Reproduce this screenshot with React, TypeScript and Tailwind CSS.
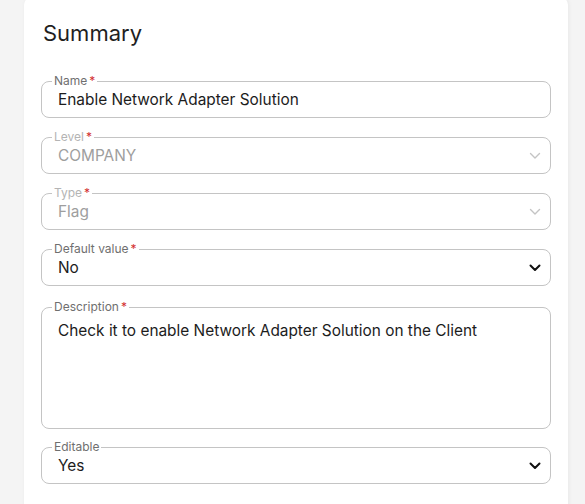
import React from "react";

type FieldProps = {
  label: string;
  required?: boolean;
  disabled?: boolean;
  children: React.ReactNode;
};

function Field({ label, required, disabled, children }: FieldProps) {
  return (
    <fieldset className="border border-[#c4c4c4] rounded-[8px] px-0 pb-0 m-0 min-w-0">
      <legend
        className={`ml-[10px] px-[2px] text-[12px] leading-[14px] ${disabled ? "text-[#b4b4b4]" : "text-[#6f6f6f]"}`}
      >
        {label}
        {required && <span className="text-[#d32f2f] ml-[2px]">*</span>}
      </legend>
      {children}
    </fieldset>
  );
}

function Chevron({ disabled }: { disabled?: boolean }) {
  return (
    <svg width="12" height="8" viewBox="0 0 12 8" fill="none">
      <path
        d="M1.5 1.5 L6 6 L10.5 1.5"
        stroke={disabled ? "#c4c4c4" : "#111111"}
        strokeWidth={disabled ? 1.4 : 2}
        strokeLinecap="round"
        strokeLinejoin="round"
      />
    </svg>
  );
}

function TextRow({ value, disabled, select }: { value: string; disabled?: boolean; select?: boolean }) {
  return (
    <div className="flex items-center justify-between pl-[16px] pr-[9px] pt-[3px] pb-[8px]">
      <span className={`text-[15.4px] leading-[18px] ${disabled ? "text-[#9e9e9e]" : "text-[#1c1c1c]"}`}>
        {value}
      </span>
      {select && <Chevron disabled={disabled} />}
    </div>
  );
}

export default function App() {
  return (
    <div
      className="min-h-[504px] bg-[#f4f4f4] pl-[24px] pr-[17px] overflow-hidden"
      style={{ fontFamily: "Inter, 'Noto Sans', sans-serif" }}
    >
      <div className="bg-white rounded-lg -mt-[3px] pt-[23px] px-[17px] pb-[40px] shadow-[1px_0_4px_rgba(0,0,0,0.05)] min-h-[520px]">
        <h2 className="pl-[2px] text-[22px] leading-[26px] text-[#1f1f1f] font-normal">Summary</h2>
        <div className="mt-[28px] flex flex-col gap-[12px]">
          <Field label="Name" required>
            <TextRow value="Enable Network Adapter Solution" />
          </Field>
          <Field label="Level" required disabled>
            <TextRow value="COMPANY" disabled select />
          </Field>
          <Field label="Type" required disabled>
            <TextRow value="Flag" disabled select />
          </Field>
          <Field label="Default value" required>
            <TextRow value="No" select />
          </Field>
          <div className="mt-[2px]">
            <Field label="Description" required>
              <div className="pl-[16px] pr-[12px] pt-[7px] h-[114px] text-[15.4px] leading-[20px] text-[#1c1c1c]">
                Check it to enable Network Adapter Solution on the Client
              </div>
            </Field>
          </div>
          <div className="-mt-[1px]">
            <Field label="Editable">
              <TextRow value="Yes" select />
            </Field>
          </div>
        </div>
      </div>
    </div>
  );
}
